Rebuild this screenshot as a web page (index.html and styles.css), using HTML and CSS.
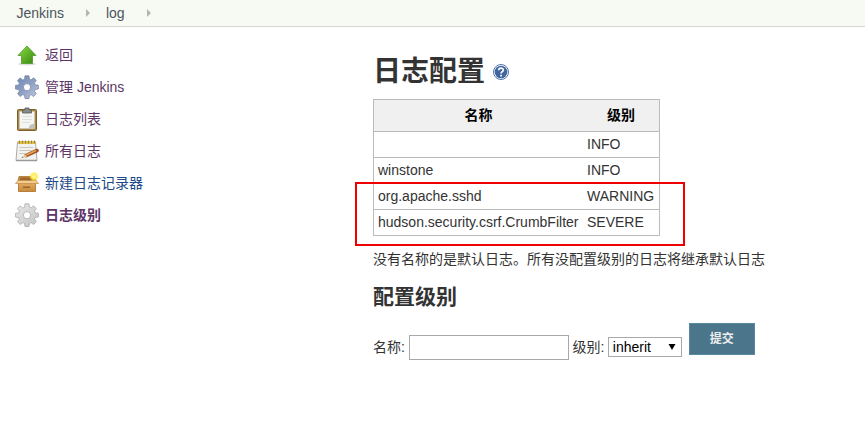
FILE: index.html
```html
<!DOCTYPE html>
<html lang="zh-CN">
<head>
<meta charset="utf-8">
<title>日志配置 [Jenkins]</title>
<link rel="stylesheet" href="styles.css">
</head>
<body>
<svg class="defs" width="0" height="0">
  <defs>
    <linearGradient id="green" x1="0" y1="0" x2="1" y2="1"><stop offset="0" stop-color="#8ade46"/><stop offset="1" stop-color="#36850d"/></linearGradient>
    <linearGradient id="blue" x1="0" y1="0" x2="1" y2="1"><stop offset="0" stop-color="#6f88b8"/><stop offset=".5" stop-color="#8f9fc4"/><stop offset="1" stop-color="#c3cbe0"/></linearGradient>
    <linearGradient id="grey" x1="0" y1="0" x2="1" y2="1"><stop offset="0" stop-color="#e8e8e8"/><stop offset="1" stop-color="#c4c4c4"/></linearGradient>
    <linearGradient id="box" x1="0" y1="0" x2="0" y2="1"><stop offset="0" stop-color="#e9b26b"/><stop offset="1" stop-color="#c98a3c"/></linearGradient>
    <radialGradient id="glow"><stop offset="0" stop-color="#fffbd0"/><stop offset=".5" stop-color="#ffec45"/><stop offset="1" stop-color="#ffe640" stop-opacity="0"/></radialGradient>
    <path id="gear" fill-rule="evenodd" d="M10 .8h4l.5 3.400 1.600.7 2.500-2.100 2.700 2.700-1.900 2.600.7 1.700 3.300.5v3.600l-3.300.6-.7 1.600 1.900 2.600-2.700 2.800-2.600-1.900-1.500.7-.5 3.200h-4l-.5-3.200-1.700-.7-2.500 1.900L2.500 18.800l1.900-2.600-.7-1.600-3.300-.6v-3.600l3.300-.5.7-1.700-1.900-2.600 2.700-2.700 2.600 2.100 1.700-.7zM12 8.600a3.600 3.600 0 1 0 0 7.200A3.600 3.600 0 0 0 12 8.600z"/>
  </defs>
</svg>
<nav class="crumbs"><a>Jenkins</a><i></i><a>log</a><i></i></nav>
<div class="page">
  <aside class="tasks">
    <a class="task"><svg viewBox="0 0 24 24"><ellipse cx="12" cy="21" rx="9" ry="1.500" fill="#ddd"/><path d="M12 3 21 12.500H17.500V20.500H6.500V12.500H3Z" fill="url(#green)" stroke="#4a9b22" stroke-width=".8"/></svg><span>返回</span></a>
    <a class="task"><svg viewBox="0 0 24 24"><use href="#gear" fill="url(#blue)" stroke="#6d7f9f" stroke-width=".7"/></svg><span>管理 Jenkins</span></a>
    <a class="task"><svg viewBox="0 0 24 24"><rect x="2.500" y="2.500" width="19" height="21" rx="1" fill="#a98543" stroke="#80602a"/><path d="M4.500 4.500H19.500V21.500H4.500Z" fill="#f5f5f2" stroke="#c9c9c5" stroke-width=".6"/><path d="M7 9.500h10M7 12.500h10M7 15.500h8" stroke="#dededb"/><path d="M19.500 16.500V21.500H13.500L15 18Z" fill="#c2c2bd"/><path d="M7.500 6V3.500L10 2.500V1h4v1.500l2.500 1V6Z" fill="#888c86" stroke="#555953" stroke-width=".8"/></svg><span>日志列表</span></a>
    <a class="task"><svg viewBox="0 0 24 24"><path d="M2.500 3H20.500L22 21.500H1Z" fill="#f2f2ef" stroke="#acaca7"/><path d="M1 21.500H22" stroke="#999" stroke-width="1.500"/><path d="M3 3.500H20.500" stroke="#e0c04c" stroke-width="3"/><path d="M4.500 1.500v3M7.500 1.500v3M10.500 1.500v3M13.500 1.500v3M16.500 1.500v3M19.500 1.500v3" stroke="#8a7535" stroke-width=".8"/><path d="M4.500 8.500h14M4.500 11.500h12M4.500 14.500h6" stroke="#c6c6c2"/><path d="M11 16.700 22 11.500" stroke="#9a5426" stroke-width="3.600" stroke-linecap="round"/><path d="M11.500 16 21 11.500" stroke="#f1a057" stroke-width="1.500"/><path d="M10.500 15.300 6.500 18.800l5.600-.5Z" fill="#e7ca9b"/><path d="m6.500 18.800 2-.2-.9-.8Z" fill="#333"/></svg><span>所有日志</span></a>
    <a class="task new"><svg viewBox="0 0 24 24"><path d="M3.500 10H20.500V20.500H3.500Z" fill="url(#box)" stroke="#a87029" stroke-width=".8"/><path d="M4 5.500H19.500L21 9.500H3Z" fill="#c98e46" stroke="#ad7227" stroke-width=".8"/><path d="M5.500 6.500H18.500L19.500 9.500H4.500Z" fill="#9b682b"/><path d="M3 9.500H21L23.500 12.500H.5Z" fill="#f2cc92" stroke="#c08a42" stroke-width=".7"/><path d="M8 15.500h7v1.500H8z" fill="#99662a"/><circle cx="19" cy="5.500" r="5" fill="url(#glow)"/></svg><span>新建日志记录器</span></a>
    <a class="task current"><svg viewBox="0 0 24 24"><use href="#gear" fill="url(#grey)" stroke="#a4a4a4" stroke-width=".7"/></svg><span>日志级别</span></a>
  </aside>
  <main>
    <h1><span>日志配置</span><svg class="help" viewBox="0 0 16 16"><circle cx="8" cy="8" r="7.500" fill="#fff" stroke="#5274a8"/><circle cx="8" cy="8" r="6.300" fill="#41659f"/><path d="M5.700 6.300C5.700 3.400 10.400 3.500 10.300 6.100 10.200 7.700 8.100 7.700 8.100 9.500M8.100 10.800v1.700" fill="none" stroke="#fff" stroke-width="1.700"/></svg></h1>
    <div class="levels">
      <table>
        <thead><tr><th>名称</th><th>级别</th></tr></thead>
        <tbody>
          <tr><td></td><td>INFO</td></tr>
          <tr><td>winstone</td><td>INFO</td></tr>
          <tr><td>org.apache.sshd</td><td>WARNING</td></tr>
          <tr><td>hudson.security.csrf.CrumbFilter</td><td>SEVERE</td></tr>
        </tbody>
      </table>
      <div class="highlight"></div>
    </div>
    <p>没有名称的是默认日志。所有没配置级别的日志将继承默认日志</p>
    <h2>配置级别</h2>
    <form>
      <label for="name">名称:</label><input id="name" type="text">
      <label for="level">级别:</label><div class="select" id="level"><span>inherit</span><svg viewBox="0 0 8 6"><path d="M.5 0H7.500L4 6Z"/></svg></div>
      <button type="button">提交</button>
    </form>
  </main>
</div>
</body>
</html>
```
FILE: styles.css
```css
* { box-sizing: border-box; }
body {
  margin: 0;
  background: #fff;
  color: #333;
  font: 14px/20px "Liberation Sans", "Noto Sans CJK SC", sans-serif;
}
.defs { position: absolute; }
.crumbs {
  display: flex;
  align-items: center;
  height: 27px;
  padding-left: 16.500px;
  background: #f6faf2;
  border-bottom: 1px solid #d3d7cf;
  color: #4d545d;
}
.crumbs i {
  margin: 0 16px 0 22px;
  border: solid transparent;
  border-width: 4px 0 4px 4px;
  border-left-color: #b4b4b4;
}
.page { display: flex; }
.tasks { width: 373px; padding: 12px 0 0 15px; }
.task {
  display: flex;
  align-items: center;
  gap: 6px;
  height: 32px;
  color: #5c3566;
}
.task svg { width: 24px; height: 24px; }
.task.new { color: #204a87; }
.task.current { font-weight: bold; }
main { flex: 1; }
h1 {
  display: flex;
  align-items: center;
  gap: 8px;
  height: 40px;
  margin: 24px 0 8px;
  font-size: 28px;
  line-height: 40px;
}
h1 span { padding-top: 2px; }
.help { width: 16px; height: 16px; margin-top: 2px; }
.levels { position: relative; width: 287px; }
table {
  width: 287px;
  height: 137px;
  border-collapse: collapse;
  border: 1px solid #bbb;
  table-layout: fixed;
}
tr { height: 26px; border-bottom: 1px solid #bbb; }
thead tr { height: 32px; background: #f0f0f0; }
th { padding: 0 4px 2px; color: #000; }
th:first-child { width: 209.500px; }
td { padding: 0 4px 2px; line-height: 20px; white-space: nowrap; }
.highlight {
  position: absolute;
  left: -18px;
  top: 83px;
  width: 330px;
  height: 64px;
  border: 2px solid #f00000;
}
p { margin: 13px 0 0; }
h2 { margin: 13px 0 0; font-size: 21px; line-height: 30px; }
form { display: flex; align-items: center; height: 50px; margin-top: 10px; }
input {
  width: 160px;
  height: 25px;
  margin: 0 3.500px 0 4px;
  padding: 1px 3px;
  border: 1px solid #a9a9a9;
  background: #fff;
}
.select {
  display: flex;
  align-items: center;
  justify-content: space-between;
  width: 74px;
  height: 20px;
  margin-left: 3.500px;
  padding: 0 5px 0 4px;
  border: 1px solid #a9a9a9;
  color: #000;
}
.select svg { width: 8px; height: 6px; }
button {
  width: 66px;
  height: 32px;
  margin: -16px 0 0 7px;
  padding: 0;
  border: 1px solid #5788a0;
  background: #4b758b;
  color: #eee;
  font: bold 12px/30px "Liberation Sans", "Noto Sans CJK SC", sans-serif;
}
```
